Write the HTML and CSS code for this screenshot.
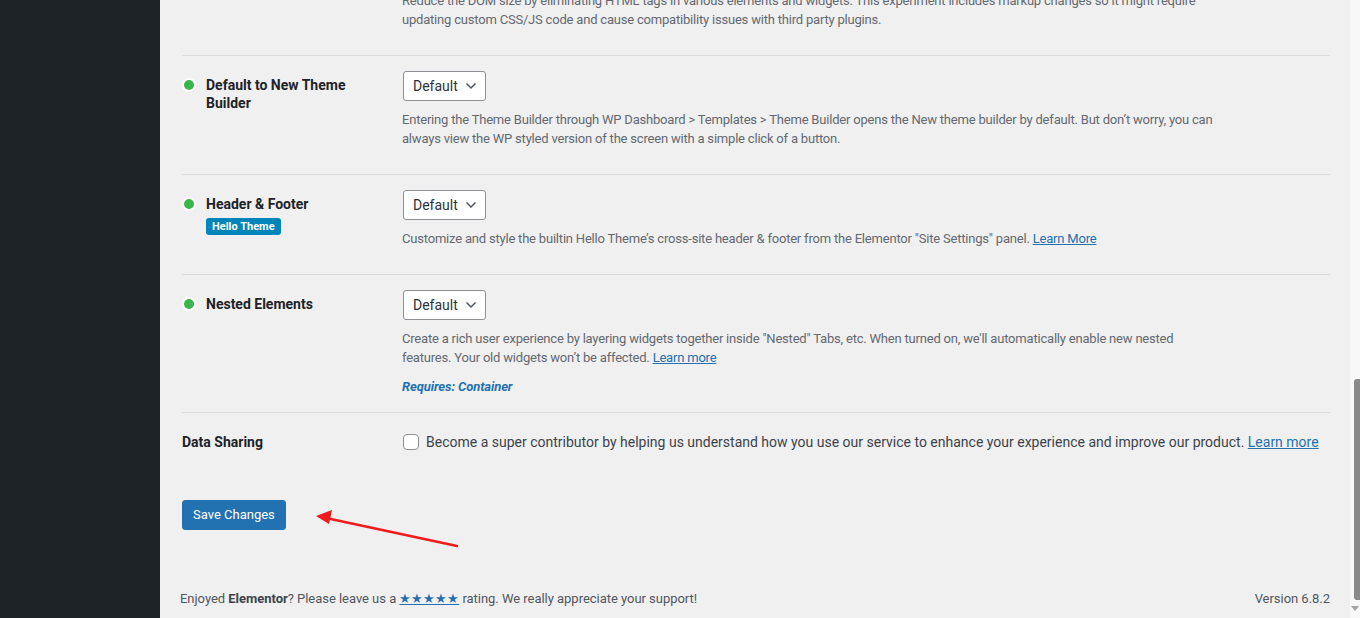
FILE: index.html
```html
<!DOCTYPE html>
<html lang="en">
<head>
<meta charset="utf-8">
<title>Elementor Settings - Features</title>
<link rel="stylesheet" href="styles.css">
</head>
<body>
<div class="screen">
  <aside class="sidebar"></aside>
  <main class="main">
    <div class="content">
      <div class="rows">
        <div class="row">
          <div class="label-col"><span class="dot"></span><span class="label">Optimized Markup</span></div>
          <div class="field-col">
            <div class="select"><span>Default</span><svg class="chev" viewBox="0 0 12 8" width="12" height="8"><path d="M1.5 1.5 L6 6 L10.5 1.5" fill="none" stroke="#50575e" stroke-width="1.5"/></svg></div>
            <p class="desc">Reduce the DOM size by eliminating HTML tags in various elements and widgets. This experiment includes markup changes so it might require<br>updating custom CSS/JS code and cause compatibility issues with third party plugins.</p>
          </div>
        </div>
        <div class="row">
          <div class="label-col"><span class="dot"></span><span class="label">Default to New Theme<br>Builder</span></div>
          <div class="field-col">
            <div class="select"><span>Default</span><svg class="chev" viewBox="0 0 12 8" width="12" height="8"><path d="M1.5 1.5 L6 6 L10.5 1.5" fill="none" stroke="#50575e" stroke-width="1.5"/></svg></div>
            <p class="desc">Entering the Theme Builder through WP Dashboard &gt; Templates &gt; Theme Builder opens the New theme builder by default. But don’t worry, you can<br>always view the WP styled version of the screen with a simple click of a button.</p>
          </div>
        </div>
        <div class="row">
          <div class="label-col"><span class="dot"></span><div class="label-stack"><span class="label">Header &amp; Footer</span><span class="badge">Hello Theme</span></div></div>
          <div class="field-col">
            <div class="select"><span>Default</span><svg class="chev" viewBox="0 0 12 8" width="12" height="8"><path d="M1.5 1.5 L6 6 L10.5 1.5" fill="none" stroke="#50575e" stroke-width="1.5"/></svg></div>
            <p class="desc">Customize and style the builtin Hello Theme’s cross-site header &amp; footer from the Elementor "Site Settings" panel. <a href="#">Learn More</a></p>
          </div>
        </div>
        <div class="row">
          <div class="label-col"><span class="dot"></span><span class="label">Nested Elements</span></div>
          <div class="field-col">
            <div class="select"><span>Default</span><svg class="chev" viewBox="0 0 12 8" width="12" height="8"><path d="M1.5 1.5 L6 6 L10.5 1.5" fill="none" stroke="#50575e" stroke-width="1.5"/></svg></div>
            <p class="desc">Create a rich user experience by layering widgets together inside "Nested" Tabs, etc. When turned on, we'll automatically enable new nested<br>features. Your old widgets won’t be affected. <a href="#">Learn more</a></p>
            <p class="requires">Requires: Container</p>
          </div>
        </div>
        <div class="row row-last">
          <div class="label-col plain"><span class="label">Data Sharing</span></div>
          <div class="field-col check-col">
            <span class="checkbox"></span>
            <span class="check-text">Become a super contributor by helping us understand how you use our service to enhance your experience and improve our product. <a href="#">Learn more</a></span>
          </div>
        </div>
      </div>
      <div class="submit"><button class="button">Save Changes</button></div>
      <svg class="arrow" width="160" height="50" viewBox="0 0 160 50">
        <line x1="155" y1="42" x2="24" y2="14" stroke="#ee1c1c" stroke-width="2.5" stroke-linecap="round"/>
        <polygon points="14,12 30,6 27,20" fill="#ee1c1c"/>
      </svg>
    </div>
    <footer class="footer">
      <p class="footer-left">Enjoyed <strong>Elementor</strong>? Please leave us a <a href="#" class="stars">★★★★★</a> rating. We really appreciate your support!</p>
      <p class="footer-right">Version 6.8.2</p>
    </footer>
  </main>
  <div class="scrollbar">
    <div class="thumb"></div>
    <div class="sb-arrow"></div>
  </div>
</div>
</body>
</html>
```

FILE: styles.css
```css
* { box-sizing: border-box; }
html, body { margin: 0; padding: 0; height: 100%; overflow: hidden; }
body {
  font-family: Roboto, "Liberation Sans", sans-serif;
  background: #f0f0f1;
  color: #3c434a;
  font-size: 13px;
}
.screen { display: flex; height: 618px; }
.sidebar { width: 160px; flex: none; background: #1d2327; }
.main { flex: 1; display: flex; flex-direction: column; min-width: 0; position: relative; }
.content { position: relative; padding: 0 20px 0 22px; margin-top: -63px; }
.rows { display: flex; flex-direction: column; }
.row {
  display: grid;
  grid-template-columns: 220px 1fr;
  border-bottom: 1px solid #dcdcde;
}
.row-last { border-bottom: none; }
.label-col { display: flex; align-items: flex-start; padding: 20px 10px 20px 0; }
.dot {
  width: 10px; height: 10px; border-radius: 50%;
  background: #39b54a;
  box-shadow: 0 0 0 2px #fff;
  margin: 4px 12px 0 2px; flex: none;
}
.label { font-size: 14px; font-weight: 700; color: #1d2327; line-height: 18px; }
.label-stack { display: flex; flex-direction: column; align-items: flex-start; }
.badge {
  margin-top: 5px;
  background: #0085ba;
  color: #fff;
  font-size: 11px; font-weight: 700;
  line-height: 17px; padding: 0 6px;
  border-radius: 3px;
}
.field-col { padding: 15px 10px 16px 0; }
.select {
  display: inline-flex; align-items: center; justify-content: space-between;
  width: 83px; height: 30px; margin-left: 1px;
  background: #fff; border: 1px solid #8c8f94; border-radius: 3px;
  padding: 0 8px 0 9px;
  font-size: 14px; color: #2c3338;
}
.chev { display: block; }
.desc { margin: 9px 0 10px; font-size: 13px; line-height: 19px; color: #646970; letter-spacing: -0.2px; }
.requires { margin: 0; font-size: 13px; line-height: 19px; font-weight: 700; font-style: italic; color: #2271b1; letter-spacing: -0.1px; }
a { color: #2271b1; text-decoration: underline; }
.check-col { display: flex; align-items: center; padding-top: 20px; padding-bottom: 20px; }
.checkbox {
  width: 16px; height: 16px; flex: none;
  border: 1px solid #8c8f94; border-radius: 4px; background: #fff;
  margin: 0 7px 0 1px;
}
.check-text { font-size: 14px; line-height: 18px; color: #3c434a; white-space: nowrap; }
.submit { padding-top: 29px; }
.button {
  font-family: inherit; font-size: 13px;
  background: #2271b1; color: #fff;
  border: 1px solid #2271b1; border-radius: 3px;
  height: 30px; padding: 0 10px; line-height: 28px;
}
.arrow { position: absolute; left: 142px; bottom: -24px; }
.footer {
  display: flex; justify-content: space-between; align-items: center;
  padding: 0 20px; margin-top: 59px;
  font-size: 13px; color: #50575e; line-height: 20px; letter-spacing: -0.03px;
}
.footer p { margin: 0; }
.footer strong { color: #3c434a; }
.stars { color: #2271b1; }
.scrollbar { width: 10px; flex: none; background: #f8f8f8; display: flex; flex-direction: column; align-items: flex-end; }
.thumb { width: 6px; height: 221px; margin-top: 379px; background: #8a8a8a; border-radius: 3px 0 0 3px; }
.sb-arrow { margin-top: 6px; width: 0; height: 0; border-left: 4px solid transparent; border-right: 4px solid transparent; border-top: 5px solid #a3a3a3; align-self: center; }
```
